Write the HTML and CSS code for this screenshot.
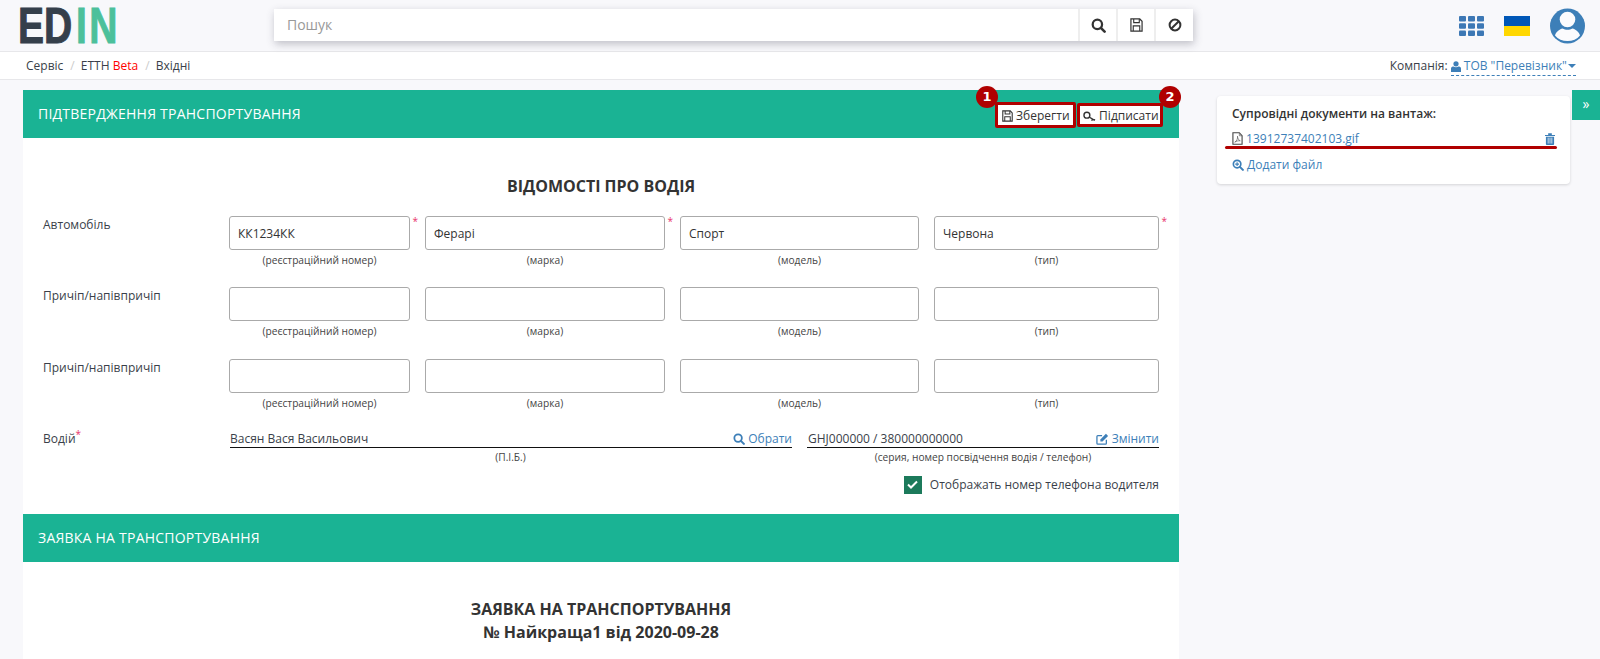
FILE: index.html
```html
<!DOCTYPE html>
<html lang="en">
<head>
<meta charset="UTF-8">
<meta name="viewport" content="width=device-width, initial-scale=1.0">
<title>ЕТТН</title>
<link rel="stylesheet" href="styles.css">
</head>
<body>

<header class="topbar">
  <div class="logo"><span class="logo-text"><span class="logo-dark">ED</span><span class="logo-green">IN</span></span></div>
  <div class="search">
    <span class="search-input">Пошук</span>
    <span class="search-btn">
      <svg width="15" height="15" viewBox="0 0 16 16"><circle cx="6.8" cy="6.8" r="5" fill="none" stroke="#333" stroke-width="2.4"/><path d="M10.5 10.5l4 4" stroke="#333" stroke-width="2.8" stroke-linecap="round"/></svg>
    </span>
    <span class="search-btn">
      <svg width="13" height="14" viewBox="0 0 14 15"><path d="M1 1h9.5L13 3.500V14H1z" fill="none" stroke="#333" stroke-width="1.3"/><path d="M4 1v4h6V1M3.500 14V8.500h7V14" fill="none" stroke="#333" stroke-width="1.2"/></svg>
    </span>
    <span class="search-btn">
      <svg width="14" height="14" viewBox="0 0 14 14"><circle cx="7" cy="7" r="5.4" fill="none" stroke="#333" stroke-width="2"/><path d="M3.2 10.8l7.6-7.6" stroke="#333" stroke-width="2"/></svg>
    </span>
  </div>
  <div class="top-right">
    <svg class="apps" width="25" height="20" viewBox="0 0 25 20" fill="#3d78b5">
      <rect width="7" height="5.5" rx="1"/><rect x="9" width="7" height="5.5" rx="1"/><rect x="18" width="7" height="5.5" rx="1"/>
      <rect y="7.2" width="7" height="5.5" rx="1"/><rect x="9" y="7.2" width="7" height="5.5" rx="1"/><rect x="18" y="7.2" width="7" height="5.5" rx="1"/>
      <rect y="14.5" width="7" height="5.5" rx="1"/><rect x="9" y="14.5" width="7" height="5.5" rx="1"/><rect x="18" y="14.5" width="7" height="5.5" rx="1"/>
    </svg>
    <div class="flag"></div>
    <svg class="avatar" width="35" height="36" viewBox="0 0 35 36">
      <circle cx="17.5" cy="18" r="17.5" fill="#3d7fb8"/>
      <circle cx="17.5" cy="11.500" r="7.800" fill="#fbfbfd"/>
      <path d="M5 27.500c1-4 5-6.500 7.500-7 3 1.800 7 1.800 10 0 2.500.5 6.500 3 7.500 7-3 3.800-7.500 5.500-12.500 5.500S8 31.300 5 27.500z" fill="#fbfbfd"/>
    </svg>
  </div>
</header>

<div class="crumbs">
  <div class="crumb-list">
    <span>Сервіс</span><i>/</i>
    <span>ЕТТН <b class="beta">Beta</b></span><i>/</i>
    <span>Вхідні</span>
  </div>
  <div class="company">Компанія:
    <span class="company-link">
      <svg width="10" height="11" viewBox="0 0 10 11" fill="#3d7fb8"><circle cx="5" cy="2.800" r="2.600"/><path d="M0 11V7.500C0 6 1.500 5.500 2.500 5.500c1.500 1 3.500 1 5 0 1 0 2.500.5 2.500 2V11z"/></svg>
      ТОВ "Перевізник"
      <span class="caret"></span>
    </span>
  </div>
</div>

<div class="page">
  <main class="main">
    <div class="bar">
      <span class="bar-title">ПІДТВЕРДЖЕННЯ ТРАНСПОРТУВАННЯ</span>
      <div class="bar-actions">
        <button class="btn save-btn">
          <svg width="11" height="12" viewBox="0 0 14 15"><path d="M1 1h9.500L13 3.500V14H1z" fill="none" stroke="#333" stroke-width="1.400"/><path d="M4 1v4h6V1M3.500 14V8.500h7V14" fill="none" stroke="#333" stroke-width="1.300"/></svg>
          Зберегти
          <span class="badge">1</span>
        </button>
        <button class="btn sign-btn">
          <svg width="13" height="11" viewBox="0 0 15 12"><circle cx="4.500" cy="4.500" r="3.400" fill="none" stroke="#333" stroke-width="1.600"/><path d="M7 6.500l6.500 4M11 9l-1 2M13 10.500l.5-1.500" stroke="#333" stroke-width="1.500"/></svg>
          Підписати
          <span class="badge">2</span>
        </button>
      </div>
    </div>

    <section class="sheet">
      <h2 class="sheet-title">ВІДОМОСТІ ПРО ВОДІЯ</h2>

      <div class="row">
        <label class="row-label">Автомобіль</label>
        <div class="cell req"><input class="field" value="КК1234КК"><small>(реєстраційний номер)</small></div>
        <div class="cell req"><input class="field" value="Ферарі"><small>(марка)</small></div>
        <div class="cell"><input class="field" value="Спорт"><small>(модель)</small></div>
        <div class="cell req"><input class="field" value="Червона"><small>(тип)</small></div>
      </div>
      <div class="row">
        <label class="row-label">Причіп/напівпричіп</label>
        <div class="cell"><input class="field"><small>(реєстраційний номер)</small></div>
        <div class="cell"><input class="field"><small>(марка)</small></div>
        <div class="cell"><input class="field"><small>(модель)</small></div>
        <div class="cell"><input class="field"><small>(тип)</small></div>
      </div>
      <div class="row row-last">
        <label class="row-label">Причіп/напівпричіп</label>
        <div class="cell"><input class="field"><small>(реєстраційний номер)</small></div>
        <div class="cell"><input class="field"><small>(марка)</small></div>
        <div class="cell"><input class="field"><small>(модель)</small></div>
        <div class="cell"><input class="field"><small>(тип)</small></div>
      </div>

      <div class="driver">
        <label class="row-label">Водій<sup class="star">*</sup></label>
        <div class="driver-cell">
          <div class="line line-name"><span>Васян Вася Васильович</span>
            <a class="link">
              <svg width="12" height="12" viewBox="0 0 16 16"><circle cx="6.800" cy="6.800" r="5" fill="none" stroke="#3d7fb8" stroke-width="2.400"/><path d="M10.500 10.500l4 4" stroke="#3d7fb8" stroke-width="2.800" stroke-linecap="round"/></svg>
              Обрати</a>
          </div>
          <small>(П.І.Б.)</small>
        </div>
        <div class="driver-cell">
          <div class="line"><span>GHJ000000 / 380000000000</span>
            <a class="link">
              <svg width="13" height="12" viewBox="0 0 15 14"><path d="M12 8v4a1 1 0 0 1-1 1H2a1 1 0 0 1-1-1V4a1 1 0 0 1 1-1h5" fill="none" stroke="#3d7fb8" stroke-width="1.500"/><path d="M5 7.500L11.500 1 14 3.500 7.500 10H5z" fill="#3d7fb8"/></svg>
              Змінити</a>
          </div>
          <small>(серия, номер посвідчення водія / телефон)</small>
        </div>
      </div>

      <div class="show-phone">
        <span class="check"><svg width="11" height="9" viewBox="0 0 11 9"><path d="M1 4.500l3 3 6-6" fill="none" stroke="#fff" stroke-width="2"/></svg></span>
        Отображать номер телефона водителя
      </div>
    </section>

    <div class="bar"><span class="bar-title">ЗАЯВКА НА ТРАНСПОРТУВАННЯ</span></div>
    <section class="sheet request">
      <h2 class="request-title">ЗАЯВКА НА ТРАНСПОРТУВАННЯ<br>№ Найкраща1 від 2020-09-28</h2>
    </section>
  </main>

  <aside class="side">
    <div class="card">
      <h4 class="card-title">Супровідні документи на вантаж:</h4>
      <div class="doc">
        <a class="link doc-link">
          <svg width="11" height="13" viewBox="0 0 12 14"><path d="M1 .7h7L11 4v9.300H1z" fill="#fff" stroke="#444" stroke-width="1.200"/><path d="M8 1v3h3M3 11c2-1 3.500-4 3-6.500 0 2.500 1.500 4.500 3 5-2-.3-4 .3-6 1.500z" fill="none" stroke="#666" stroke-width=".8"/></svg>
          13912737402103.gif</a>
        <svg width="10" height="12" viewBox="0 0 11 13" fill="#3d7fb8"><path d="M0 2h11v1.200H0zM3.500.3h4V2h-4zM1 4h9v8a1 1 0 0 1-1 1H2a1 1 0 0 1-1-1z"/><path d="M3.500 5v6.500M5.500 5v6.500M7.500 5v6.500" stroke="#fff" stroke-width=".8"/></svg>
        <span class="doc-mark"></span>
      </div>
      <a class="link add-file">
        <svg width="12" height="12" viewBox="0 0 16 16"><circle cx="6.800" cy="6.800" r="5" fill="none" stroke="#3d7fb8" stroke-width="2.200"/><path d="M10.500 10.500l4 4" stroke="#3d7fb8" stroke-width="2.800" stroke-linecap="round"/><path d="M4.300 6.800h5M6.800 4.300v5" stroke="#3d7fb8" stroke-width="1.500"/></svg>
        Додати файл</a>
    </div>
    <div class="toggle">»</div>
  </aside>
</div>

</body>
</html>
```

FILE: styles.css
```css
/* page */
html, body {
  height: 659px;
  overflow: hidden;
}

body {
  margin: 0;
  background-color: #f8f8fb;
  color: #3a3f4a;
  font-family: "Open Sans", sans-serif;
  font-size: 12px;
}

svg {
  vertical-align: -2px;
}

/* top bar */
.topbar {
  height: 51px;
  display: flex;
  align-items: center;
  border-bottom: 1px solid #e7e7ea;
}

.logo {
  width: 274px;
  flex: none;
}

.logo-text {
  display: block;
  margin-left: 18px;
  font-family: "Liberation Sans", sans-serif;
  font-size: 50px;
  font-weight: bold;
  line-height: 50px;
  white-space: nowrap;
  -webkit-text-stroke: 1px;
  transform: scaleX(0.78);
  transform-origin: left;
}

.logo-dark {
  color: #353f4b;
}

.logo-green {
  color: #4cc09b;
  margin-left: 5px;
  letter-spacing: 3px;
}

.search {
  width: 919px;
  height: 32px;
  margin-top: -1px;
  display: flex;
  background-color: #fff;
  box-shadow: 1px 3px 8px rgba(60, 60, 80, 0.3);
}

.search-input {
  flex-grow: 1;
  padding: 0 13px;
  color: #999;
  font-size: 14px;
  line-height: 32px;
}

.search-btn {
  width: 38px;
  box-sizing: border-box;
  display: flex;
  align-items: center;
  justify-content: center;
  border-left: 2px solid #eee;
}

.search-btn:last-child {
  width: 39px;
}

.top-right {
  margin-left: 266px;
  display: flex;
  align-items: center;
}

.flag {
  width: 26px;
  height: 20px;
  margin-left: 20px;
  background: linear-gradient(#0057b7 50%, #ffd700 50%);
}

.avatar {
  margin-left: 20px;
  vertical-align: 0;
}

/* breadcrumb */
.crumbs {
  height: 27px;
  padding: 0 24px 0 26px;
  display: flex;
  justify-content: space-between;
  align-items: center;
  background-color: #fff;
  border-bottom: 1px solid #e7e7ea;
}

.crumb-list i {
  margin: 0 3px 0 7px;
  color: #ccc;
  font-style: normal;
}

.beta {
  color: #f00;
  font-weight: normal;
}

.company-link {
  color: #3d7fb8;
  border-bottom: 1px dashed #3d7fb8;
  padding-bottom: 1px;
}

.caret {
  display: inline-block;
  margin-left: -2px;
  vertical-align: 2px;
  border-top: 4px solid #3d7fb8;
  border-left: 4px solid transparent;
  border-right: 4px solid transparent;
}

/* layout */
.page {
  display: flex;
  padding: 10px 0 0 23px;
}

.main {
  width: 1156px;
  flex: none;
}

.bar {
  height: 48px;
  padding: 0 15px;
  display: flex;
  justify-content: space-between;
  align-items: center;
  background-color: #1ab394;
  color: #fff;
}

.bar-title {
  margin-top: -2px;
  font-size: 14px;
  letter-spacing: 0.23px;
}

.bar-actions {
  display: flex;
  align-items: flex-start;
  gap: 1px;
  margin-top: 2px;
  margin-right: 1px;
}

.btn {
  position: relative;
  box-sizing: border-box;
  padding: 0;
  background-color: #fff;
  border: 3px solid #b00000;
  border-radius: 2px;
  color: #333;
  font-family: "Open Sans", sans-serif;
  font-size: 12px;
  text-align: left;
  white-space: nowrap;
}

.save-btn {
  width: 81px;
  height: 26px;
  padding-left: 4px;
}

.sign-btn {
  width: 86px;
  height: 24px;
  margin-top: 1px;
  padding-left: 3px;
}

.badge {
  position: absolute;
  top: -19px;
  left: -22px;
  width: 22px;
  height: 22px;
  border-radius: 50%;
  background-color: #b00000;
  color: #fff;
  font-family: "DejaVu Sans", sans-serif;
  font-size: 13px;
  font-weight: bold;
  line-height: 22px;
  text-align: center;
}

.sign-btn .badge {
  top: -20px;
  left: auto;
  right: -21px;
}

.sheet {
  background-color: #fff;
}

.sheet-title {
  margin: 0;
  padding: 37px 0 19px;
  color: #333;
  font-size: 16px;
  line-height: 22px;
  text-align: center;
}

/* form rows */
.row {
  display: grid;
  grid-template-columns: 171px 181px 240px 239px 225px;
  column-gap: 15px;
  height: 71px;
  padding-left: 20px;
}

.row-last {
  height: 70px;
  margin-top: 1px;
}

.row-label {
  margin-right: -15px;
  line-height: 17px;
}

.cell {
  position: relative;
  text-align: center;
}

.field {
  display: block;
  width: 100%;
  height: 34px;
  box-sizing: border-box;
  padding: 0 8px;
  border: 1px solid #aaa;
  border-radius: 3px;
  color: #333;
  font-family: "Open Sans", sans-serif;
  font-size: 12px;
}

small {
  display: block;
  margin-top: 3px;
  color: #444;
  font-size: 10.2px;
  line-height: 14px;
}

.req::after {
  content: "*";
  position: absolute;
  top: -2px;
  right: -8px;
  color: #e8336b;
  font-size: 10px;
}

.star {
  color: #e8336b;
  font-size: 10px;
  line-height: 0;
}

/* driver */
.driver {
  display: grid;
  grid-template-columns: 171px 563px 352px;
  column-gap: 15px;
  padding-left: 20px;
}

.driver .row-label {
  line-height: 20px;
}

.driver-cell {
  text-align: center;
}

.driver small {
  margin-top: 2px;
}

.line {
  display: flex;
  justify-content: space-between;
  height: 18px;
  line-height: 20px;
  border-bottom: 1px solid #111;
  padding-left: 1px;
}

.line-name {
  margin-left: 1px;
  padding-left: 0;
}

.link {
  color: #3d7fb8;
  text-decoration: none;
}

.show-phone {
  margin-top: 11px;
  padding: 0 20px 20px 0;
  display: flex;
  justify-content: flex-end;
  align-items: center;
  gap: 8px;
  line-height: 19px;
}

.check {
  width: 18px;
  height: 18px;
  display: flex;
  align-items: center;
  justify-content: center;
  background-color: #1c7a5b;
}

.request {
  height: 120px;
}

.request-title {
  margin: 0;
  padding-top: 36px;
  color: #333;
  font-size: 16px;
  line-height: 23px;
  text-align: center;
}

/* side panel */
.side {
  display: flex;
  flex-grow: 1;
  padding-left: 38px;
  justify-content: space-between;
  align-items: flex-start;
}

.card {
  width: 353px;
  height: 88px;
  margin-top: 6px;
  box-sizing: border-box;
  padding: 9px 15px;
  background-color: #fff;
  border-radius: 4px;
  box-shadow: 0 1px 3px rgba(0, 0, 0, 0.15);
}

.card-title {
  margin: 0;
  color: #333;
  font-size: 12px;
  font-weight: 600;
  line-height: 18px;
}

.doc {
  position: relative;
  display: flex;
  justify-content: space-between;
  align-items: center;
  margin-top: 7px;
  line-height: 18px;
}

.doc-mark {
  position: absolute;
  left: -7px;
  right: -2px;
  top: 16px;
  height: 3px;
  border-radius: 2px;
  background-color: #b00000;
}

.add-file {
  display: block;
  margin-top: 8px;
}

.toggle {
  width: 28px;
  height: 30px;
  background-color: #1ab394;
  color: #fff;
  font-size: 14px;
  line-height: 28px;
  text-align: center;
}
```
